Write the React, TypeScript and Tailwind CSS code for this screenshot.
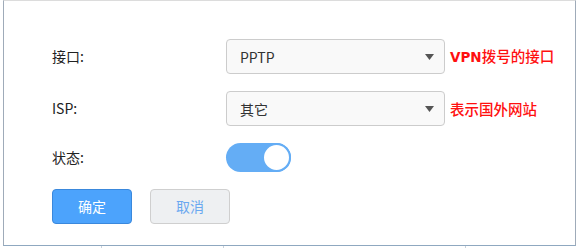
import React from "react";

const cjk = { fontFamily: '"Noto Sans CJK SC", "Liberation Sans", sans-serif' };

function Select({ value }: { value: string }) {
  return (
    <div className="w-[219px] h-[35px] rounded-[4px] border border-[#cccccc] bg-[#f9f9f9] flex items-center pl-[13px] pr-[10px]">
      <span className="flex-1 text-[14px] text-[#333333] leading-none">{value}</span>
      <svg width="9" height="6" viewBox="0 0 9 6" className="mt-[1px]">
        <path d="M0 0 H9 L4.5 6 Z" fill="#555555" />
      </svg>
    </div>
  );
}

export default function App() {
  return (
    <div className="w-[577px] h-[248px] bg-white flex flex-col" style={cjk}>
      <div className="ml-[3px] w-[573px] h-[246px] border-t border-t-[#dcdcdc] border-l border-r border-b border-l-[#9fabb9] border-r-[#9fabb9] border-b-[#8fa8c0] pt-[38px] pl-[48px] flex flex-col">
        <div className="flex items-center h-[35px]">
          <div className="w-[174px] text-[14px] text-[#222222]">接口:</div>
          <Select value="PPTP" />
          <span className="ml-[5px] text-[14.5px] font-medium text-[#ff1010] flex items-baseline">
            <span className="font-['DejaVu_Sans'] font-bold text-[13.5px]">VPN</span>
            <span>拨号的接口</span>
          </span>
        </div>
        <div className="flex items-center h-[35px] mt-[17px]">
          <div className="w-[174px] text-[14px] text-[#222222]">ISP:</div>
          <Select value="其它" />
          <span className="ml-[5px] text-[14.5px] font-medium text-[#ff1010]">表示国外网站</span>
        </div>
        <div className="flex items-center h-[29px] mt-[17px]">
          <div className="w-[174px] text-[14px] text-[#222222]">状态:</div>
          <div className="w-[65px] h-[29px] rounded-full bg-[#64adf5] flex items-center justify-end">
            <div className="w-[29px] h-[29px] rounded-full bg-white border-[2px] border-[#64adf5]" />
          </div>
        </div>
        <div className="flex items-center mt-[17px] gap-[18px]">
          <button className="w-[80px] h-[35px] rounded-[4px] bg-[#4ca3fc] border border-[#3a88dc] text-white text-[14px]">确定</button>
          <button className="w-[80px] h-[35px] rounded-[4px] bg-[#eef0f2] border border-[#cfcfcf] text-[#6aa8f0] text-[14px]">取消</button>
        </div>
      </div>
      <div className="h-[2px] flex">
        <div className="w-[101px]" />
        <div className="w-px bg-[#c8d2dc]" />
        <div className="w-[121px]" />
        <div className="w-px bg-[#c8d2dc]" />
        <div className="w-[241px]" />
        <div className="w-px bg-[#c8d2dc]" />
      </div>
    </div>
  );
}
